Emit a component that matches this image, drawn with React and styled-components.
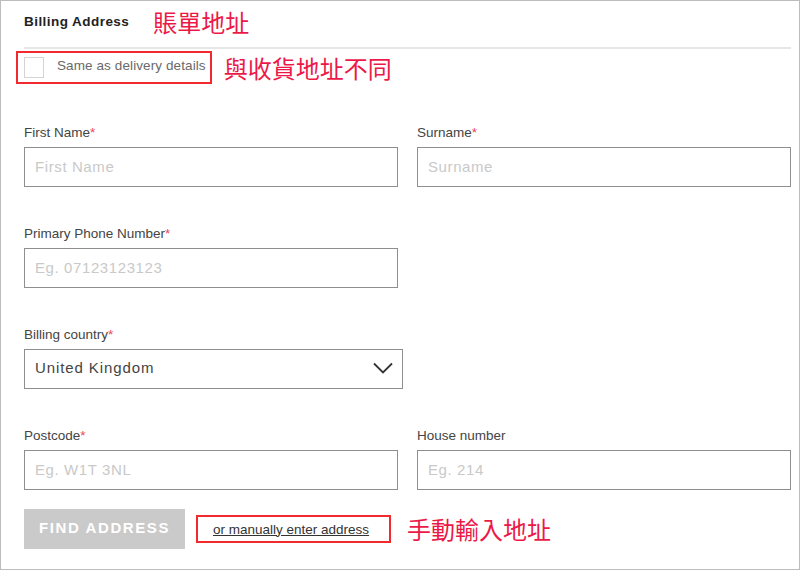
import styled, { createGlobalStyle } from 'styled-components';

const GlobalStyle = createGlobalStyle`
  html, body {
    margin: 0;
    padding: 0;
    background: #fff;
  }
  body {
    font-family: "Liberation Sans", Arial, sans-serif;
  }
  * {
    box-sizing: border-box;
  }
`;

const Page = styled.div`
  width: 800px;
  height: 570px;
  border: 1px solid #bdbdbd;
  padding: 0 8px 0 23px;
  background: #fff;
`;

const Header = styled.div`
  display: flex;
  align-items: center;
  height: 41px;
`;

const Title = styled.h2`
  margin: 0;
  font-size: 13.5px;
  font-weight: bold;
  color: #222;
  letter-spacing: 0.45px;
`;

const Note = styled.span`
  font-family: "Noto Sans CJK TC", "Noto Sans CJK SC", sans-serif;
  font-size: 24px;
  line-height: 1;
  color: #ec1848;
  margin-left: ${(p) => p.$gap || 14}px;
`;

const Divider = styled.hr`
  margin: 5px 0 0;
  border: none;
  border-top: 2px solid #e6e6e6;
  height: 0;
`;

const CheckRow = styled.div`
  display: flex;
  align-items: center;
  margin-top: 2px;
`;

const Marked = styled.div`
  display: flex;
  align-items: center;
  border: 2px solid #f22a2e;
  height: ${(p) => p.$h}px;
  margin-left: ${(p) => p.$ml || 0}px;
  padding: 0 ${(p) => p.$pr || 7}px 0 ${(p) => p.$pl || 6}px;
`;

const Box = styled.span`
  width: 20px;
  height: 21px;
  border: 1px solid #d4d4d4;
  background: #fff;
`;

const CheckText = styled.span`
  margin-left: 13px;
  font-size: 13.5px;
  letter-spacing: 0.1px;
  color: #6a6a6a;
  padding-bottom: 4px;
`;

const Grid = styled.div`
  display: grid;
  grid-template-columns: 374px 374px;
  column-gap: 19px;
  row-gap: 39px;
  margin-top: 41px;
`;

const Field = styled.div`
  display: flex;
  flex-direction: column;
`;

const Label = styled.label`
  font-size: 13.5px;
  line-height: 16px;
  color: #444;
  margin-bottom: 6px;
`;

const Star = styled.span`
  color: #e8435a;
`;

const Input = styled.input`
  height: 40px;
  width: 100%;
  border: 1px solid #8e8e8e;
  padding: 0 10px 2px;
  font-family: "Liberation Sans", Arial, sans-serif;
  font-size: 15px;
  letter-spacing: 0.6px;
  color: #444;
  outline: none;
  &::placeholder {
    color: #c9c9c9;
  }
`;

const SelectBox = styled.div`
  display: flex;
  align-items: center;
  justify-content: space-between;
  height: 40px;
  width: 379px;
  border: 1px solid #8e8e8e;
  padding: 0 9px 3px 10px;
  font-size: 15px;
  letter-spacing: 0.9px;
  color: #444;
`;

const Actions = styled.div`
  display: flex;
  align-items: center;
  margin-top: 19px;
`;

const Button = styled.button`
  width: 161px;
  height: 40px;
  border: none;
  background: #cacaca;
  color: #fff;
  font-family: "Liberation Sans", Arial, sans-serif;
  font-size: 15px;
  font-weight: bold;
  letter-spacing: 1.6px;
  padding: 0 0 3px;
`;

const Link = styled.a`
  font-size: 13.5px;
  color: #333;
  text-decoration: underline;
  cursor: pointer;
`;

function Chevron() {
  return (
    <svg width="20" height="12" viewBox="0 0 20 12">
      <polyline points="1,1.5 10,10.5 19,1.5" fill="none" stroke="#333" strokeWidth="1.8" />
    </svg>
  );
}

export default function App() {
  return (
    <>
      <GlobalStyle />
      <Page>
        <Header>
          <Title>Billing Address</Title>
          <Note $gap={24}>賬單地址</Note>
        </Header>
        <Divider />
        <CheckRow>
          <Marked $h={33} $ml={-8} $pr={4}>
            <Box />
            <CheckText>Same as delivery details</CheckText>
          </Marked>
          <Note $gap={12}>與收貨地址不同</Note>
        </CheckRow>

        <Grid>
          <Field>
            <Label>First Name<Star>*</Star></Label>
            <Input placeholder="First Name" />
          </Field>
          <Field>
            <Label>Surname<Star>*</Star></Label>
            <Input placeholder="Surname" />
          </Field>
          <Field>
            <Label>Primary Phone Number<Star>*</Star></Label>
            <Input placeholder="Eg. 07123123123" />
          </Field>
          <div />
          <Field>
            <Label>Billing country<Star>*</Star></Label>
            <SelectBox>
              <span>United Kingdom</span>
              <Chevron />
            </SelectBox>
          </Field>
          <div />
          <Field>
            <Label>Postcode<Star>*</Star></Label>
            <Input placeholder="Eg. W1T 3NL" />
          </Field>
          <Field>
            <Label>House number</Label>
            <Input placeholder="Eg. 214" />
          </Field>
        </Grid>

        <Actions>
          <Button>FIND ADDRESS</Button>
          <Marked $h={28} $ml={11} $pl={15} $pr={20}>
            <Link>or manually enter address</Link>
          </Marked>
          <Note $gap={16}>手動輸入地址</Note>
        </Actions>
      </Page>
    </>
  );
}
